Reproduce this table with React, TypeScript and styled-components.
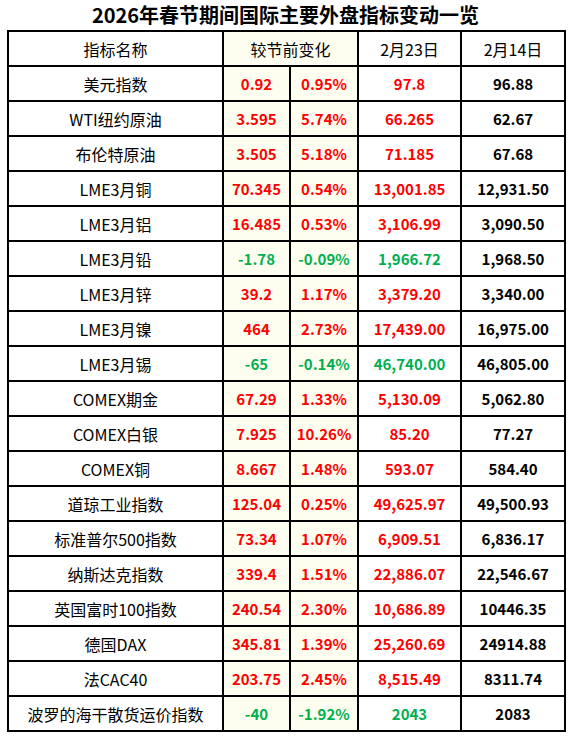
import React from 'react';
import styled, { createGlobalStyle } from 'styled-components';

const GlobalStyle = createGlobalStyle`
  html, body {
    margin: 0;
    padding: 0;
    background: #ffffff;
  }
  body {
    font-family: "Noto Sans CJK SC", "Noto Sans", sans-serif;
    color: #000;
  }
`;

const Page = styled.div`
  width: 572px;
  padding-left: 7px;
  box-sizing: border-box;
`;

const Title = styled.h1`
  margin: 0;
  width: 557px;
  height: 30px;
  line-height: 30px;
  text-align: center;
  font-size: 20px;
  font-weight: 700;
`;

const Table = styled.table`
  width: 557px;
  table-layout: fixed;
  border-collapse: collapse;
  border: 2px solid #000;
`;

const Row = styled.tr`
  height: 35px;
`;

const Cell = styled.td<{ $shade?: boolean; $tone?: 'up' | 'down' | 'plain'; $bold?: boolean }>`
  border: 2px solid #000;
  padding: 0;
  text-align: center;
  vertical-align: middle;
  font-size: ${p => (p.$bold ? '15px' : '16px')};
  line-height: 20px;
  white-space: nowrap;
  font-weight: ${p => (p.$bold ? 700 : 400)};
  background: ${p => (p.$shade ? '#fefef0' : '#ffffff')};
  color: ${p => (p.$tone === 'up' ? '#ff0000' : p.$tone === 'down' ? '#00b050' : '#000000')};
`;

const HeadCell = styled(Cell).attrs({ as: 'th' })`
  font-weight: 400;
`;

type Item = {
  name: string;
  diff: string;
  pct: string;
  now: string;
  before: string;
};

const items: Item[] = [
  { name: '美元指数', diff: '0.92', pct: '0.95%', now: '97.8', before: '96.88' },
  { name: 'WTI纽约原油', diff: '3.595', pct: '5.74%', now: '66.265', before: '62.67' },
  { name: '布伦特原油', diff: '3.505', pct: '5.18%', now: '71.185', before: '67.68' },
  { name: 'LME3月铜', diff: '70.345', pct: '0.54%', now: '13,001.85', before: '12,931.50' },
  { name: 'LME3月铝', diff: '16.485', pct: '0.53%', now: '3,106.99', before: '3,090.50' },
  { name: 'LME3月铅', diff: '-1.78', pct: '-0.09%', now: '1,966.72', before: '1,968.50' },
  { name: 'LME3月锌', diff: '39.2', pct: '1.17%', now: '3,379.20', before: '3,340.00' },
  { name: 'LME3月镍', diff: '464', pct: '2.73%', now: '17,439.00', before: '16,975.00' },
  { name: 'LME3月锡', diff: '-65', pct: '-0.14%', now: '46,740.00', before: '46,805.00' },
  { name: 'COMEX期金', diff: '67.29', pct: '1.33%', now: '5,130.09', before: '5,062.80' },
  { name: 'COMEX白银', diff: '7.925', pct: '10.26%', now: '85.20', before: '77.27' },
  { name: 'COMEX铜', diff: '8.667', pct: '1.48%', now: '593.07', before: '584.40' },
  { name: '道琼工业指数', diff: '125.04', pct: '0.25%', now: '49,625.97', before: '49,500.93' },
  { name: '标准普尔500指数', diff: '73.34', pct: '1.07%', now: '6,909.51', before: '6,836.17' },
  { name: '纳斯达克指数', diff: '339.4', pct: '1.51%', now: '22,886.07', before: '22,546.67' },
  { name: '英国富时100指数', diff: '240.54', pct: '2.30%', now: '10,686.89', before: '10446.35' },
  { name: '德国DAX', diff: '345.81', pct: '1.39%', now: '25,260.69', before: '24914.88' },
  { name: '法CAC40', diff: '203.75', pct: '2.45%', now: '8,515.49', before: '8311.74' },
  { name: '波罗的海干散货运价指数', diff: '-40', pct: '-1.92%', now: '2043', before: '2083' },
];

export default function App() {
  return (
    <Page>
      <GlobalStyle />
      <Title>2026年春节期间国际主要外盘指标变动一览</Title>
      <Table>
        <colgroup>
          <col style={{ width: 215 }} />
          <col style={{ width: 67 }} />
          <col style={{ width: 68 }} />
          <col style={{ width: 103 }} />
          <col style={{ width: 104 }} />
        </colgroup>
        <thead>
          <Row>
            <HeadCell>指标名称</HeadCell>
            <HeadCell colSpan={2} $shade>较节前变化</HeadCell>
            <HeadCell>2月23日</HeadCell>
            <HeadCell>2月14日</HeadCell>
          </Row>
        </thead>
        <tbody>
          {items.map(it => {
            const tone = it.diff.startsWith('-') ? 'down' : 'up';
            return (
              <Row key={it.name}>
                <Cell>{it.name}</Cell>
                <Cell $shade $bold $tone={tone}>{it.diff}</Cell>
                <Cell $shade $bold $tone={tone}>{it.pct}</Cell>
                <Cell $bold $tone={tone}>{it.now}</Cell>
                <Cell $bold>{it.before}</Cell>
              </Row>
            );
          })}
        </tbody>
      </Table>
    </Page>
  );
}
